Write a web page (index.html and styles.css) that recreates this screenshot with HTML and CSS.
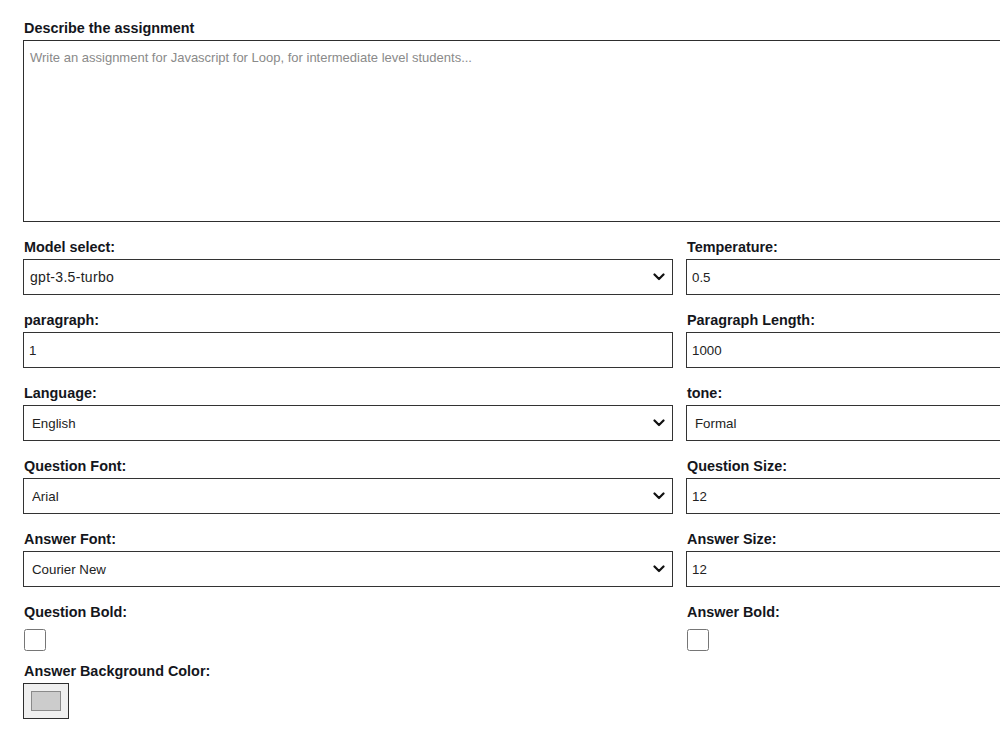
FILE: index.html
```html
<!DOCTYPE html>
<html lang="en">
<head>
<meta charset="utf-8">
<title>Assignment generator</title>
<link rel="stylesheet" href="styles.css">
</head>
<body>
<form class="form">
  <div class="field field--full">
    <label class="label" for="desc">Describe the assignment</label>
    <textarea id="desc" class="textarea" placeholder="Write an assignment for Javascript for Loop, for intermediate level students..."></textarea>
  </div>

  <div class="grid">
    <div class="field">
      <label class="label" for="model">Model select:</label>
      <select id="model" class="control select select--tight">
        <option>gpt-3.5-turbo</option>
      </select>
    </div>
    <div class="field">
      <label class="label" for="temp">Temperature:</label>
      <input id="temp" class="control input" type="text" value="0.5">
    </div>

    <div class="field">
      <label class="label" for="para">paragraph:</label>
      <input id="para" class="control input" type="text" value="1">
    </div>
    <div class="field">
      <label class="label" for="plen">Paragraph Length:</label>
      <input id="plen" class="control input" type="text" value="1000">
    </div>

    <div class="field">
      <label class="label" for="lang">Language:</label>
      <select id="lang" class="control select">
        <option>English</option>
      </select>
    </div>
    <div class="field">
      <label class="label" for="tone">tone:</label>
      <select id="tone" class="control select">
        <option>Formal</option>
      </select>
    </div>

    <div class="field">
      <label class="label" for="qfont">Question Font:</label>
      <select id="qfont" class="control select">
        <option>Arial</option>
      </select>
    </div>
    <div class="field">
      <label class="label" for="qsize">Question Size:</label>
      <input id="qsize" class="control input" type="text" value="12">
    </div>

    <div class="field">
      <label class="label" for="afont">Answer Font:</label>
      <select id="afont" class="control select">
        <option>Courier New</option>
      </select>
    </div>
    <div class="field">
      <label class="label" for="asize">Answer Size:</label>
      <input id="asize" class="control input" type="text" value="12">
    </div>

    <div class="field">
      <label class="label" for="qbold">Question Bold:</label>
      <input id="qbold" class="checkbox" type="checkbox">
    </div>
    <div class="field">
      <label class="label" for="abold">Answer Bold:</label>
      <input id="abold" class="checkbox" type="checkbox">
    </div>
  </div>

  <div class="field field--color">
    <label class="label" for="bg">Answer Background Color:</label>
    <input id="bg" class="color" type="color" value="#cccccc">
  </div>
</form>
</body>
</html>
```

FILE: styles.css
```css
html, body {
  margin: 0;
  padding: 0;
  background: #ffffff;
  overflow: hidden;
}

body {
  font-family: "Liberation Sans", Arial, sans-serif;
  color: #111111;
}

.form {
  width: 1313px;
  padding: 20px 0 0 23px;
}

.field {
  display: flex;
  flex-direction: column;
  align-items: flex-start;
  gap: 3px;
}

.label {
  font-size: 14.4px;
  font-weight: 700;
  line-height: 17px;
  color: #14161c;
  padding-left: 1px;
}

.textarea {
  box-sizing: border-box;
  width: 100%;
  height: 182px;
  margin: 0;
  padding: 9px 6px;
  border: 1px solid #2e2e2e;
  border-radius: 0;
  font-family: "Liberation Sans", Arial, sans-serif;
  font-size: 13px;
  line-height: 15px;
  color: #222;
  resize: none;
  outline: none;
}

.textarea::placeholder {
  color: #8a8a8a;
}

.grid {
  display: grid;
  grid-template-columns: 650px 650px;
  column-gap: 13px;
  row-gap: 17px;
  margin-top: 17px;
}

.control {
  box-sizing: border-box;
  width: 100%;
  height: 36px;
  margin: 0;
  border: 1px solid #333333;
  border-radius: 0;
  background-color: #ffffff;
  font-family: "Liberation Sans", Arial, sans-serif;
  font-size: 13.3px;
  color: #222222;
  outline: none;
}

.input {
  padding: 0 5px;
}

.select {
  -webkit-appearance: none;
  appearance: none;
  padding: 0 30px 0 8px;
  background-image: url("data:image/svg+xml;utf8,<svg xmlns='http://www.w3.org/2000/svg' width='12' height='8' viewBox='0 0 12 8'><path d='M1.5 1.5 L6 6 L10.5 1.5' fill='none' stroke='%23111' stroke-width='2.2' stroke-linecap='round' stroke-linejoin='round'/></svg>");
  background-repeat: no-repeat;
  background-position: right 7px center;
  background-size: 12px 8px;
}

.select--tight {
  padding-left: 6px;
  font-size: 14px;
  letter-spacing: 0.3px;
}

.checkbox {
  width: 22px;
  height: 22px;
  margin: 5px 0 0 1px;
}

.field--color {
  margin-top: 12px;
}

.color {
  box-sizing: border-box;
  width: 46px;
  height: 36px;
  margin: 0;
  padding: 3px;
  border: 1px solid #2e2e2e;
  border-radius: 0;
  background: #efefef;
  cursor: pointer;
}

.color::-webkit-color-swatch-wrapper {
  padding: 4px;
}

.color::-webkit-color-swatch {
  border: 1px solid #8a8a8a;
  border-radius: 0;
}
```
